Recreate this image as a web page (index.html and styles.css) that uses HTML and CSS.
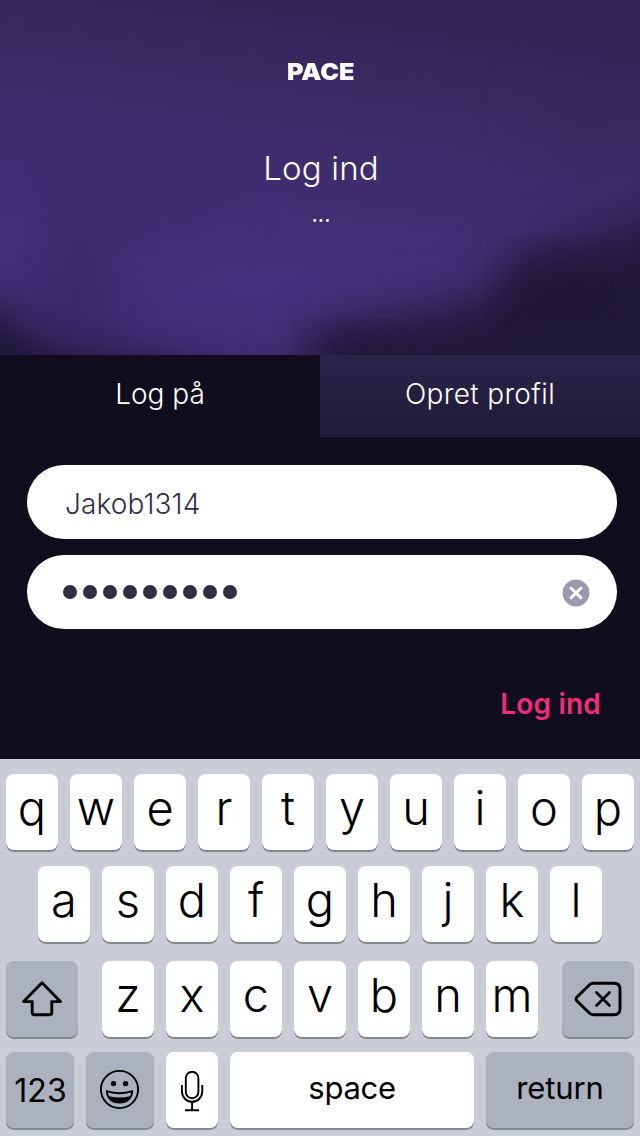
FILE: index.html
```html
<!DOCTYPE html>
<html lang="da">
<head>
<meta charset="utf-8">
<title>PACE – Log ind</title>
<link rel="stylesheet" href="styles.css">
</head>
<body>
<main class="screen">
  <header class="hero">
    <svg class="hero-bg" viewBox="0 0 640 437" width="640" height="437" aria-hidden="true">
      <defs>
        <linearGradient id="base" x1="0.6" y1="0" x2="0.4" y2="1">
          <stop offset="0" stop-color="#2f2453"/>
          <stop offset="0.25" stop-color="#3a2b67"/>
          <stop offset="0.65" stop-color="#43327b"/>
          <stop offset="1" stop-color="#3d2d74"/>
        </linearGradient>
        <filter id="soft" x="-50%" y="-50%" width="200%" height="200%" color-interpolation-filters="sRGB"><feGaussianBlur stdDeviation="26"/></filter>
        <filter id="wide" x="-100%" y="-100%" width="300%" height="300%" color-interpolation-filters="sRGB"><feGaussianBlur stdDeviation="30"/></filter>
      </defs>
      <rect width="640" height="437" fill="url(#base)"/>
      <ellipse cx="78" cy="280" rx="28" ry="70" fill="#2f2458" opacity=".7" filter="url(#wide)"/>
      <ellipse cx="130" cy="210" rx="90" ry="30" fill="#3a2b67" opacity=".6" filter="url(#wide)"/>
      <ellipse cx="585" cy="120" rx="40" ry="60" fill="#312659" opacity=".5" filter="url(#wide)"/>
      <path d="M740 180 L625 230 L520 260 L475 302 L385 318 L318 335 L290 385 L290 520 L740 520Z" fill="#201837" filter="url(#soft)"/>
      <ellipse cx="550" cy="280" rx="32" ry="22" fill="#1a132d" opacity=".8" filter="url(#soft)"/>
      <ellipse cx="350" cy="354" rx="30" ry="18" fill="#1a132d" opacity=".8" filter="url(#soft)"/>
      <path d="M-80 290 L-10 305 L45 350 L130 362 L200 374 L235 400 L240 480 L-80 480Z" fill="#1a1430" filter="url(#soft)"/>
    </svg>
    <div class="brand">PACE</div>
    <h1 class="title">Log ind</h1>
    <div class="subtitle">...</div>
    <nav class="tabs">
      <a class="tab tab-active">Log på</a>
      <a class="tab tab-other">Opret profil</a>
    </nav>
  </header>
  <form class="form">
    <div class="field"><span class="username">Jakob1314</span></div>
    <div class="field">
      <span class="password"><i></i><i></i><i></i><i></i><i></i><i></i><i></i><i></i><i></i></span>
      <svg class="clear" width="28" height="28" viewBox="0 0 28 28"><circle cx="14" cy="14" r="13.4" fill="#9c98ae"/><path d="M8.2 8.2L19.8 19.8M19.8 8.2L8.2 19.8" stroke="#fff" stroke-width="2.9"/></svg>
    </div>
    <div class="submit">Log ind</div>
  </form>
  <section class="keyboard">
    <div class="row">
      <span class="key">q</span><span class="key">w</span><span class="key">e</span><span class="key">r</span><span class="key">t</span><span class="key">y</span><span class="key">u</span><span class="key">i</span><span class="key">o</span><span class="key">p</span>
    </div>
    <div class="row row-2">
      <span class="key">a</span><span class="key">s</span><span class="key">d</span><span class="key">f</span><span class="key">g</span><span class="key">h</span><span class="key">j</span><span class="key">k</span><span class="key">l</span>
    </div>
    <div class="row row-3">
      <span class="key key-side"><svg width="72" height="76" viewBox="0 0 72 76"><path d="M36 21.8L54.4 40.6H45.8V51.5Q45.8 53.8 43.5 53.8H28.5Q26.2 53.8 26.2 51.5V40.6H17.6Z" fill="none" stroke="#000" stroke-width="2.9" stroke-linejoin="round"/></svg></span>
      <span class="letters"><span class="key">z</span><span class="key">x</span><span class="key">c</span><span class="key">v</span><span class="key">b</span><span class="key">n</span><span class="key">m</span></span>
      <span class="key key-side"><svg width="72" height="76" viewBox="0 0 72 76"><path d="M30.5 22.3H52Q58 22.3 58 28.3V47.7Q58 53.7 52 53.7H31.5Q29 53.7 27.3 52L15 40Q13 38 15 36L27 24.2Q28.7 22.3 31 22.3Z" fill="none" stroke="#000" stroke-width="2.9" stroke-linejoin="round"/><path d="M34.5 31.5L47.5 44.5M47.5 31.5L34.5 44.5" stroke="#000" stroke-width="2.7" stroke-linecap="round"/></svg></span>
    </div>
    <div class="row row-4">
      <span class="key key-num">123</span>
      <span class="key key-emoji"><svg width="68" height="76" viewBox="0 0 68 76"><circle cx="33.5" cy="37.5" r="18.6" fill="none" stroke="#000" stroke-width="1.9"/><circle cx="27.5" cy="31.6" r="2.7"/><circle cx="39.6" cy="31.6" r="2.7"/><path d="M20.7 38.8Q33.5 43.2 46.4 38.8C46.5 46.5 40.8 50.7 33.5 50.7C26.2 50.7 20.6 46.5 20.7 38.8Z" fill="#000" stroke="#000" stroke-width="1.4" stroke-linejoin="round"/><path d="M22 40.4Q33.5 44 45.1 40.4Q44.8 42.8 43.8 44.2Q33.5 47 23.3 44.2Q22.2 42.6 22 40.4Z" fill="#abb1bd"/></svg></span>
      <span class="key"><svg width="52" height="76" viewBox="0 0 52 76"><rect x="19.8" y="19.8" width="12.6" height="26.4" rx="6.3" fill="none" stroke="#000" stroke-width="1.9"/><path d="M15.9 33V39C15.9 45.2 20.4 49.8 26.1 49.8S36.3 45.2 36.3 39V33M26.1 49.8V58.2M19 58.2H33" fill="none" stroke="#000" stroke-width="1.9"/></svg></span>
      <span class="key key-space">space</span>
      <span class="key key-return">return</span>
    </div>
  </section>
</main>
</body>
</html>
```
FILE: styles.css
```css
* { box-sizing: border-box; }

body {
  margin: 0;
  font-family: Inter, "Liberation Sans", sans-serif;
  background: #100e1e;
}

.screen {
  width: 640px;
  height: 1136px;
  overflow: hidden;
  display: flex;
  flex-direction: column;
}

.hero {
  position: relative;
  height: 437px;
  flex: none;
  display: flex;
  flex-direction: column;
  align-items: center;
  color: #fff;
  isolation: isolate;
}

.hero-bg {
  position: absolute;
  inset: 0;
  z-index: -1;
}

.brand {
  margin-top: 56px;
  padding-left: 1px;
  font-size: 23px;
  line-height: 32px;
  font-weight: 900;
  transform: scaleX(1.1);
}

.title {
  margin: 59px 0 0;
  padding-left: 2px;
  font-size: 33px;
  line-height: 42px;
  font-weight: 350;
  letter-spacing: 0.2px;
}

.subtitle {
  margin-top: 8px;
  padding-left: 2px;
  font-size: 22px;
  line-height: 34px;
}

.tabs {
  width: 640px;
  margin-top: auto;
  display: grid;
  grid-template-columns: 1fr 1fr;
}

.tab {
  height: 82px;
  text-align: center;
  font-size: 28px;
  line-height: 78px;
  font-weight: 350;
  letter-spacing: 0.35px;
}

.tab-active {
  background: #100e1e;
  line-height: 79px;
  letter-spacing: 0;
}

.tab-other {
  background: linear-gradient(#2a254a, #1f1b38);
}

.form {
  height: 322px;
  flex: none;
  padding: 28px 23px 0 27px;
  display: flex;
  flex-direction: column;
  gap: 16px;
}

.field {
  height: 74px;
  flex: none;
  padding: 0 27px 0 36px;
  border-radius: 37px;
  background: #fff;
  display: flex;
  align-items: center;
  justify-content: space-between;
}

.username {
  padding: 3px 0 0 2px;
  color: #332e47;
  font-size: 28px;
  font-weight: 350;
  letter-spacing: 0.1px;
}

.password {
  display: flex;
  gap: 6px;
}

.password i {
  width: 14px;
  height: 14px;
  border-radius: 50%;
  background: #332d43;
}

.clear { margin-top: 2px; }

.submit {
  align-self: flex-end;
  margin: 39px 16px 0 0;
  color: #f22b7b;
  font-size: 28px;
  line-height: 40px;
  font-weight: 600;
  letter-spacing: 0.2px;
}

.keyboard {
  height: 377px;
  flex: none;
  padding: 14px 6px 0;
  border-top: 1px solid #d4d2e0;
  background: #c9cdd6;
  color: #000;
}

.row {
  display: flex;
  justify-content: space-between;
}

.row-2 {
  margin-top: 16px;
  padding: 0 32px;
}

.row-3 { margin-top: 19px; }

.row-4 { margin-top: 15px; }

.letters {
  display: flex;
  gap: 12px;
}

.key {
  width: 52px;
  height: 76px;
  border-radius: 8px;
  background: #fff;
  box-shadow: 0 2px 0 #848890;
  text-align: center;
  font-size: 47px;
  line-height: 68px;
  font-weight: 300;
}

.key svg { display: block; }

.key-side,
.key-num,
.key-emoji,
.key-return { background: #abb1bd; }

.key-side { width: 72px; }

.key-num,
.key-emoji { width: 68px; }

.key-num {
  padding-left: 1px;
  font-size: 32px;
  line-height: 78px;
  font-weight: 400;
}

.key-space,
.key-return {
  width: 244px;
  font-size: 31px;
  line-height: 71px;
  font-weight: 400;
  letter-spacing: -0.3px;
}

.key-return { width: 148px; letter-spacing: -0.1px; }
```
